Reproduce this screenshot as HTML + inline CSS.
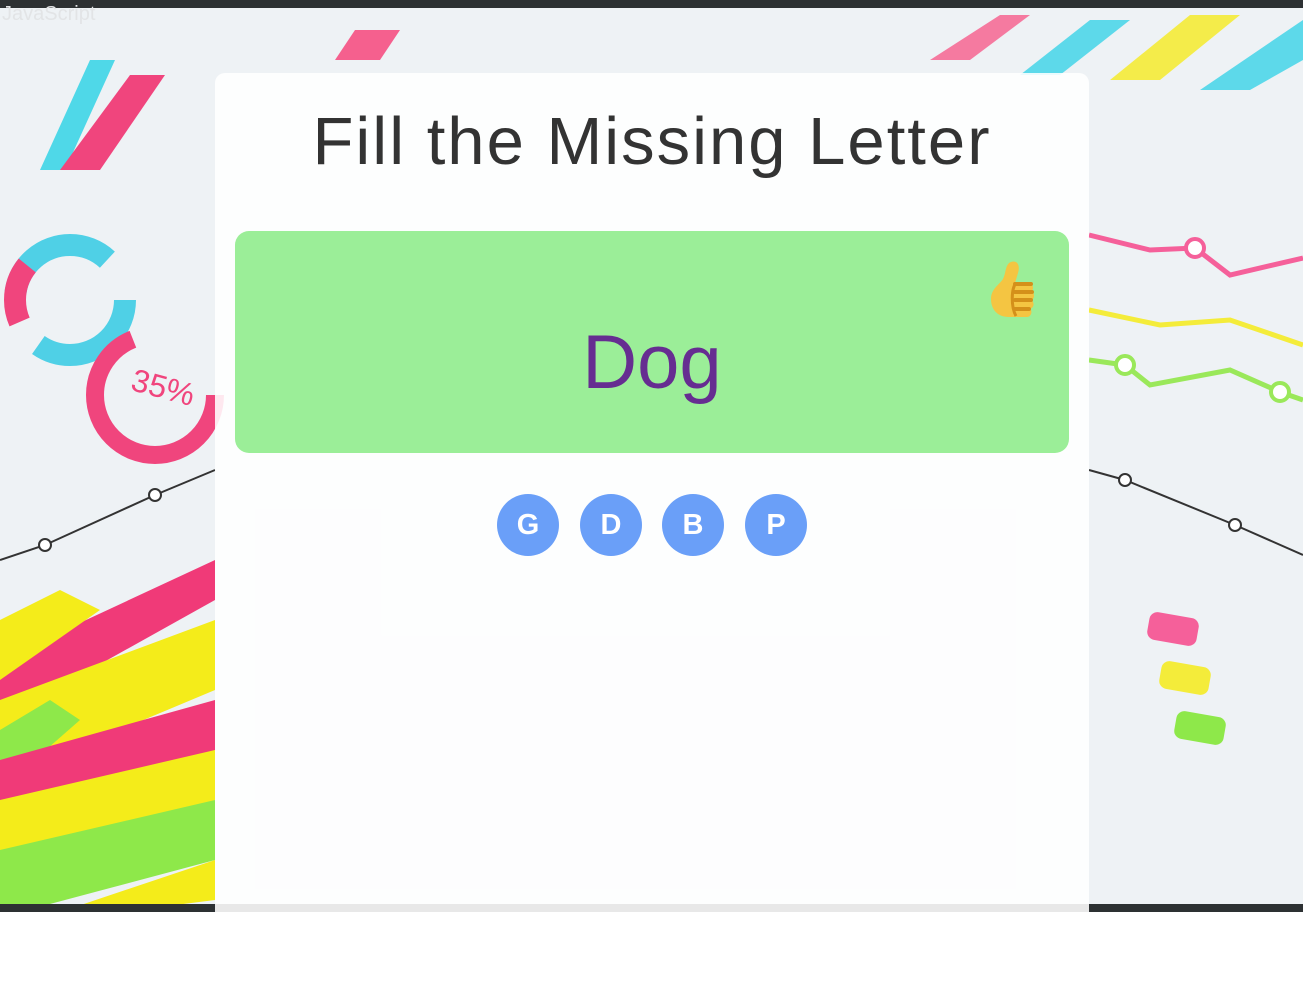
<!DOCTYPE html>
<html><head><style>
html,body{margin:0;padding:0;width:1303px;height:997px;background:#fff;overflow:hidden;font-family:"Liberation Sans",sans-serif}
#bg{position:absolute;left:0;top:0;width:1303px;height:912px}
#top{position:absolute;left:0;top:0;width:1303px;height:8px;background:#2d3133}
#bot{position:absolute;left:0;top:904px;width:1303px;height:8px;background:#2d3133}
#card{position:absolute;left:215px;top:73px;width:874px;height:839px;background:rgba(255,255,255,0.88);border-radius:10px 10px 0 0}
#cardbot{position:absolute;left:215px;top:904px;width:874px;height:8px;background:#e8e8e8}
h1{position:absolute;left:0;width:874px;top:30px;margin:0;text-align:center;font-size:67px;font-weight:normal;color:#333;letter-spacing:2px}
#green{position:absolute;left:20px;top:158px;width:834px;height:222px;background:#9bee98;border-radius:14px}
#word{position:absolute;left:0;width:834px;top:88px;text-align:center;font-size:76px;color:#662d91}
.b{position:absolute;top:421px;width:62px;height:62px;border-radius:50%;background:#6a9ff8;color:#fff;font-weight:bold;font-size:29px;text-align:center;line-height:62px}
#ghost{position:absolute;left:2px;top:3px;font-size:20px;color:#e2e4e6}
</style></head><body>
<svg id="bg" width="1303" height="912" viewBox="0 0 1303 912">
<rect width="1303" height="912" fill="#eef2f5"/>
<polygon points="40,170 90,60 115,60 65,170" fill="#4fd8e8"/>
<polygon points="60,170 130,75 165,75 100,170" fill="#f0457d"/>
<polygon points="335,60 355,30 400,30 380,60" fill="#f5608e"/>
<polygon points="930,60 1000,15 1030,15 970,60" fill="#f57aa0"/>
<polygon points="1020,75 1090,20 1130,20 1060,75" fill="#5dd9ea"/>
<polygon points="1110,80 1190,15 1240,15 1160,80" fill="#f4ec4a"/>
<polygon points="1200,90 1303,20 1303,60 1250,90" fill="#5dd9ea"/>
<circle cx="70" cy="300" r="55" fill="none" stroke="#4fd0e6" stroke-width="22" stroke-dasharray="120 60"/>
<circle cx="70" cy="300" r="55" fill="none" stroke="#f0457d" stroke-width="22" stroke-dasharray="60 300" stroke-dashoffset="-150"/>
<circle cx="155" cy="395" r="60" fill="none" stroke="#f0457d" stroke-width="18" stroke-dasharray="260 120"/>
<text x="130" y="395" fill="#f0457d" font-size="32" transform="rotate(15 150 390)">35%</text>
<polyline points="0,560 45,545 155,495 215,470" fill="none" stroke="#333" stroke-width="2"/>
<circle cx="45" cy="545" r="6" fill="#fff" stroke="#333" stroke-width="2"/>
<circle cx="155" cy="495" r="6" fill="#fff" stroke="#333" stroke-width="2"/>
<polygon points="0,660 215,560 215,600 0,720" fill="#f03a78"/>
<polygon points="0,620 60,590 100,610 0,680" fill="#f4ec1a"/>
<polygon points="0,700 215,620 215,690 0,780" fill="#f4ec1a"/>
<polygon points="0,730 50,700 80,720 0,790" fill="#8ee84a"/>
<polygon points="0,760 215,700 215,750 0,830" fill="#f03a78"/>
<polygon points="0,800 215,750 215,800 0,880" fill="#f4ec1a"/>
<polygon points="0,850 215,800 215,860 20,912 0,912" fill="#8ee84a"/>
<polygon points="60,912 215,860 215,900 120,912" fill="#f4ec1a"/>
<polyline points="1089,235 1150,250 1195,248 1230,275 1303,258" fill="none" stroke="#f5609a" stroke-width="5"/>
<circle cx="1195" cy="248" r="9" fill="#fff" stroke="#f5609a" stroke-width="4"/>
<polyline points="1089,310 1160,325 1230,320 1303,345" fill="none" stroke="#f4ec3a" stroke-width="5"/>
<polyline points="1089,360 1125,365 1150,385 1230,370 1280,392 1303,400" fill="none" stroke="#9ae85a" stroke-width="5"/>
<circle cx="1125" cy="365" r="9" fill="#fff" stroke="#9ae85a" stroke-width="4"/>
<circle cx="1280" cy="392" r="9" fill="#fff" stroke="#9ae85a" stroke-width="4"/>
<polyline points="1089,470 1125,480 1235,525 1303,555" fill="none" stroke="#333" stroke-width="2"/>
<circle cx="1125" cy="480" r="6" fill="#fff" stroke="#333" stroke-width="2"/>
<circle cx="1235" cy="525" r="6" fill="#fff" stroke="#333" stroke-width="2"/>
<rect x="1148" y="615" width="50" height="28" rx="8" fill="#f5609a" transform="rotate(10 1173 629)"/>
<rect x="1160" y="664" width="50" height="28" rx="8" fill="#f4ec3a" transform="rotate(10 1185 678)"/>
<rect x="1175" y="714" width="50" height="28" rx="8" fill="#8ee84a" transform="rotate(10 1200 728)"/>
</svg>
<div id="top"></div>
<div id="ghost">JavaScript</div>
<div id="card">
<h1>Fill the Missing Letter</h1>
<div id="green"><div id="word">Dog</div>
<svg style="position:absolute;left:752px;top:28px" width="56" height="64" viewBox="0 0 56 64">
<path d="M22 4 C28 0 34 4 31 14 L28 24 L40 24 C46 24 48 30 44 32 C48 34 48 40 44 41 C48 43 47 49 43 50 C46 52 44 58 40 58 L22 58 C10 58 4 50 4 40 C4 30 12 26 16 20 C19 14 18 8 22 4 Z" fill="#f4c542"/>
<path d="M28 25 L44 25 M28 33 L45 33 M28 41 L44 41 M28 50 L42 50" stroke="#d4901a" stroke-width="4" stroke-linecap="round"/>
<path d="M29 24 C24 30 24 48 29 57" stroke="#d4901a" stroke-width="3" fill="none"/>
</svg></div>
<div class="b" style="left:282px">G</div>
<div class="b" style="left:365px">D</div>
<div class="b" style="left:447px">B</div>
<div class="b" style="left:530px">P</div>
</div>
<div id="bot"></div>
<div id="cardbot"></div>
</body></html>
